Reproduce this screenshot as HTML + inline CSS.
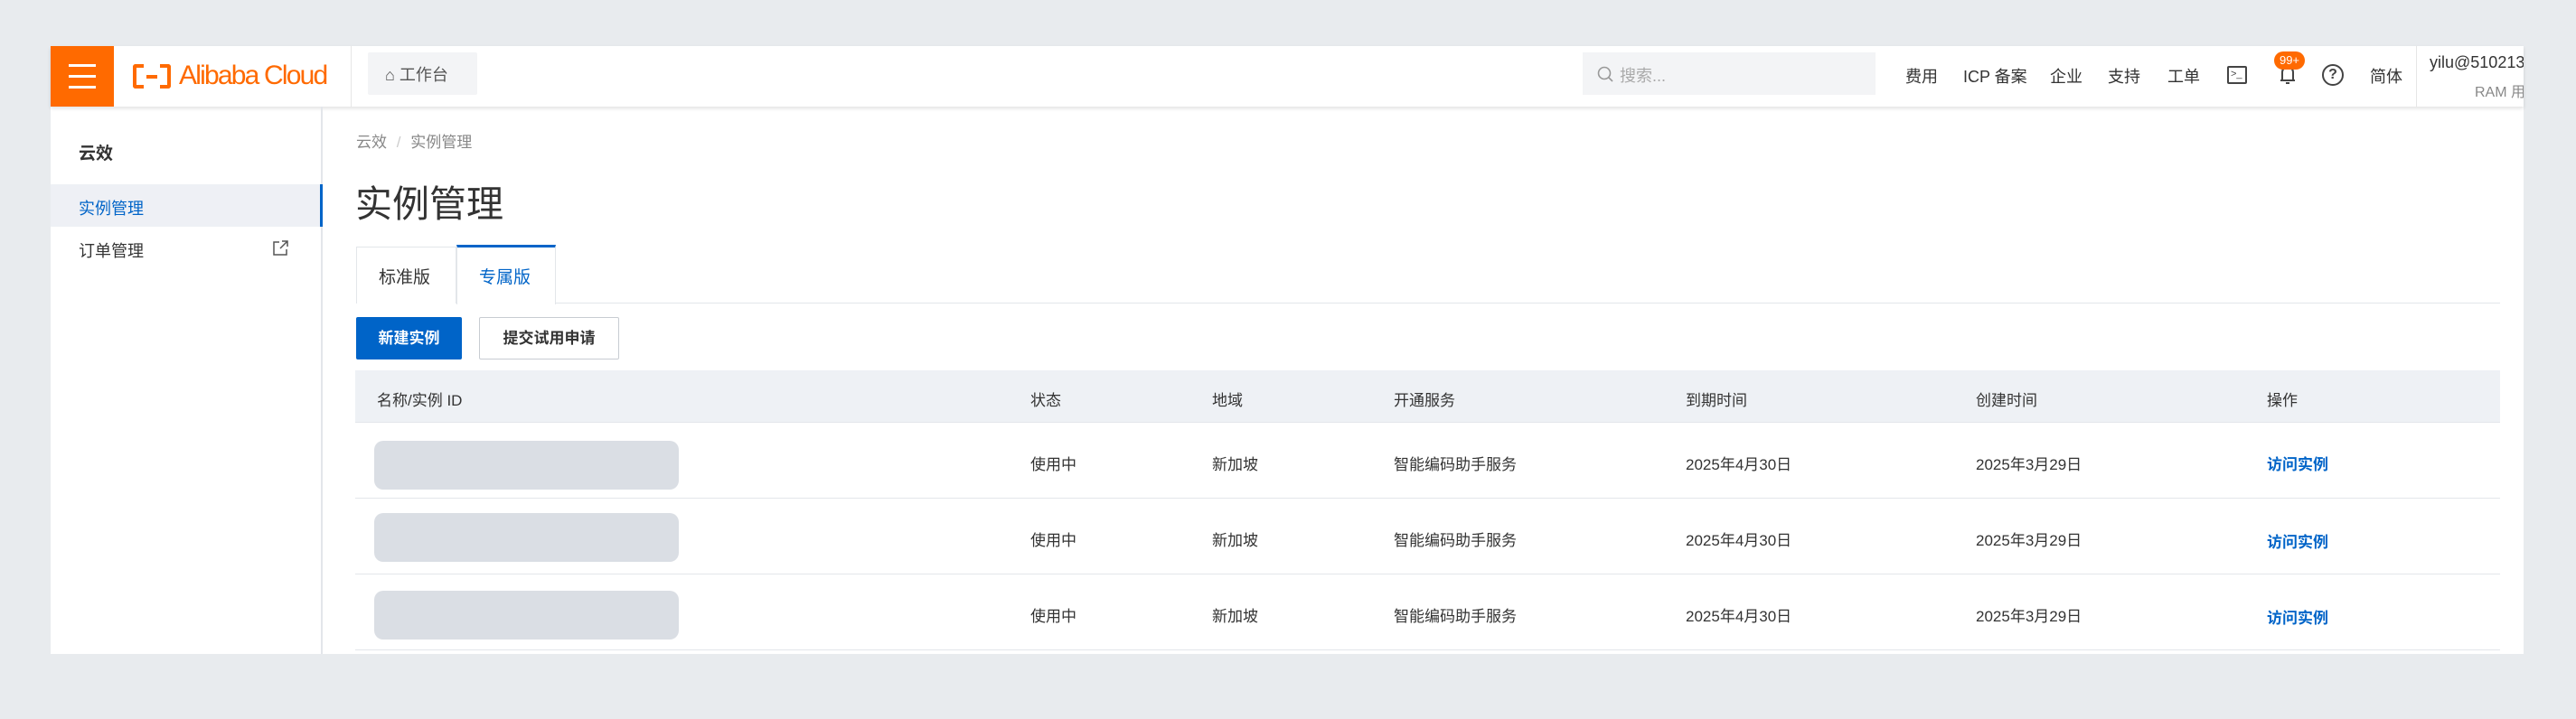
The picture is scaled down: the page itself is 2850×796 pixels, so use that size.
<!DOCTYPE html>
<html><head><meta charset="utf-8"><style>
*{box-sizing:border-box;margin:0;padding:0}
body{width:2850px;height:796px;background:#e8ebee;font-family:"Liberation Sans","Noto Sans CJK SC",sans-serif;color:#333;position:relative;overflow:hidden}
.a{position:absolute;white-space:nowrap}
.panel{position:absolute;left:56px;top:51px;width:2736px;height:673px;background:#fff;overflow:hidden}
.t{font-size:17px;color:#333}
.blue{color:#0064c8}
</style></head><body>
<div class="panel"></div>
<!-- header -->
<div class="a" style="left:56px;top:51px;width:2736px;height:67px;background:#fff;box-shadow:0 2px 4px rgba(0,0,0,.12);overflow:hidden">
  <div class="a" style="left:0;top:0;width:70px;height:67px;background:#ff6a00">
    <div class="a" style="left:20px;top:20px;width:30px;height:3px;background:#fff"></div>
    <div class="a" style="left:20px;top:32px;width:30px;height:3px;background:#fff"></div>
    <div class="a" style="left:20px;top:44px;width:30px;height:3px;background:#fff"></div>
  </div>
  <div class="a" style="left:91px;top:20px;width:44px;height:28px">
    <div class="a" style="left:0;top:0;width:12px;height:27px;border:4px solid #ff6a00;border-right:none;border-radius:3px 0 0 3px"></div>
    <div class="a" style="left:30px;top:0;width:12px;height:27px;border:4px solid #ff6a00;border-left:none;border-radius:0 3px 3px 0"></div>
    <div class="a" style="left:15px;top:12px;width:12px;height:4px;background:#ff6a00"></div>
  </div>
  <div class="a" style="left:142px;top:16px;font-size:30px;color:#ff6a00;letter-spacing:-1.8px">Alibaba Cloud</div>
  <div class="a" style="left:332px;top:0;width:1px;height:67px;background:#e6e6e6"></div>
  <div class="a" style="left:351px;top:7px;width:121px;height:47px;background:#f3f4f6;border-radius:2px"></div>
  <div class="a" style="left:370px;top:18px;font-size:18px;color:#555">⌂ 工作台</div>
  <div class="a" style="left:1695px;top:7px;width:324px;height:47px;background:#f3f4f6"></div>
  <svg class="a" style="left:1710px;top:21px" width="20" height="20" viewBox="0 0 20 20"><circle cx="9" cy="9" r="6.5" fill="none" stroke="#999" stroke-width="1.6"/><path d="M14 14l4 4" stroke="#999" stroke-width="1.6"/></svg>
  <div class="a" style="left:1736px;top:19px;font-size:18px;color:#aaa">搜索...</div>
  <div class="a t" style="left:2052px;top:20px;font-size:18px">费用</div>
  <div class="a t" style="left:2116px;top:20px;font-size:18px">ICP 备案</div>
  <div class="a t" style="left:2212px;top:20px;font-size:18px">企业</div>
  <div class="a t" style="left:2276px;top:20px;font-size:18px">支持</div>
  <div class="a t" style="left:2342px;top:20px;font-size:18px">工单</div>
  <div class="a" style="left:2408px;top:22px;width:22px;height:20px;border:2px solid #444;border-radius:2px;font-size:11px;line-height:14px;padding-left:2px;color:#444">&gt;_</div>
  <svg class="a" style="left:2464px;top:19px" width="22" height="26" viewBox="0 0 22 26"><path d="M5 19V10a6 6 0 0112 0v9zM3 19h16M9 22h4" fill="none" stroke="#444" stroke-width="2"/></svg>
  <div class="a" style="left:2460px;top:6px;width:34px;height:20px;background:#ff6a00;border-radius:10px;color:#fff;font-size:13px;text-align:center;line-height:20px">99+</div>
  <div class="a" style="left:2513px;top:20px;width:24px;height:24px;border:2px solid #444;border-radius:50%;font-size:16px;text-align:center;line-height:20px;color:#444;font-weight:bold">?</div>
  <div class="a t" style="left:2566px;top:20px;font-size:18px">简体</div>
  <div class="a" style="left:2617px;top:0;width:1px;height:67px;background:#e6e6e6"></div>
  <div class="a t" style="left:2632px;top:8px;font-size:18px">yilu@510213</div>
  <div class="a" style="left:2682px;top:37px;font-size:16px;color:#888">RAM 用户</div>
</div>
<!-- sidebar -->
<div class="a" style="left:56px;top:118px;width:301px;height:606px;border-right:2px solid #e3e6ea"></div>
<div class="a" style="left:87px;top:155px;font-size:19px;font-weight:bold;color:#333">云效</div>
<div class="a" style="left:56px;top:204px;width:301px;height:47px;background:#eef0f5;border-right:3px solid #0064c8"></div>
<div class="a blue" style="left:87px;top:217px;font-size:18px">实例管理</div>
<div class="a t" style="left:87px;top:264px;font-size:18px">订单管理</div>
<svg class="a" style="left:300px;top:265px" width="20" height="20" viewBox="0 0 20 20"><path d="M9 3H3v14h14v-6M12 2h6v6M18 2l-8 8" fill="none" stroke="#555" stroke-width="1.5"/></svg>
<!-- content -->
<div class="a" style="left:394px;top:143px;font-size:17px;color:#888">云效 <span style="color:#ccc;margin:0 6px">/</span> 实例管理</div>
<div class="a" style="left:393px;top:192px;font-size:41px;color:#333">实例管理</div>
<div class="a" style="left:394px;top:335px;width:2372px;height:1px;background:#e3e6ea"></div>
<div class="a" style="left:394px;top:273px;width:111px;height:63px;border:1px solid #e3e6ea;border-bottom:none;background:#fff"></div>
<div class="a" style="left:419px;top:292px;font-size:19px;color:#333">标准版</div>
<div class="a" style="left:505px;top:271px;width:110px;height:66px;border:1px solid #e3e6ea;border-top:3px solid #0064c8;border-bottom:none;background:#fff"></div>
<div class="a blue" style="left:530px;top:292px;font-size:19px">专属版</div>
<div class="a" style="left:394px;top:351px;width:117px;height:47px;background:#0064c8;border-radius:2px;color:#fff;font-size:17px;font-weight:bold;text-align:center;line-height:47px">新建实例</div>
<div class="a" style="left:530px;top:351px;width:155px;height:47px;border:1px solid #c8ccd2;border-radius:2px;color:#333;font-size:17px;font-weight:bold;text-align:center;line-height:45px">提交试用申请</div>
<!-- table -->
<div class="a" style="left:393px;top:410px;width:2373px;height:58px;background:#eef1f5;border-bottom:1px solid #e3e6ea"></div>
<div class="a t" style="left:417px;top:429px">名称/实例 ID</div>
<div class="a t" style="left:1140px;top:429px">状态</div>
<div class="a t" style="left:1341px;top:429px">地域</div>
<div class="a t" style="left:1542px;top:429px">开通服务</div>
<div class="a t" style="left:1865px;top:429px">到期时间</div>
<div class="a t" style="left:2186px;top:429px">创建时间</div>
<div class="a t" style="left:2508px;top:429px">操作</div>
<div class="a" style="left:393px;top:551px;width:2373px;height:1px;background:#e3e6ea"></div>
<div class="a" style="left:393px;top:635px;width:2373px;height:1px;background:#e3e6ea"></div>
<div class="a" style="left:393px;top:719px;width:2373px;height:1px;background:#e3e6ea"></div>
<div class="a" style="left:414px;top:488px;width:337px;height:54px;background:#dadee4;border-radius:10px"></div>
<div class="a" style="left:414px;top:568px;width:337px;height:54px;background:#dadee4;border-radius:10px"></div>
<div class="a" style="left:414px;top:654px;width:337px;height:54px;background:#dadee4;border-radius:10px"></div>
<div class="a t" style="left:1140px;top:500px">使用中</div><div class="a t" style="left:1341px;top:500px">新加坡</div><div class="a t" style="left:1542px;top:500px">智能编码助手服务</div><div class="a t" style="left:1865px;top:500px">2025年4月30日</div><div class="a t" style="left:2186px;top:500px">2025年3月29日</div><div class="a blue" style="left:2508px;top:500px;font-size:17px;font-weight:bold">访问实例</div>
<div class="a t" style="left:1140px;top:584px">使用中</div><div class="a t" style="left:1341px;top:584px">新加坡</div><div class="a t" style="left:1542px;top:584px">智能编码助手服务</div><div class="a t" style="left:1865px;top:584px">2025年4月30日</div><div class="a t" style="left:2186px;top:584px">2025年3月29日</div><div class="a blue" style="left:2508px;top:586px;font-size:17px;font-weight:bold">访问实例</div>
<div class="a t" style="left:1140px;top:668px">使用中</div><div class="a t" style="left:1341px;top:668px">新加坡</div><div class="a t" style="left:1542px;top:668px">智能编码助手服务</div><div class="a t" style="left:1865px;top:668px">2025年4月30日</div><div class="a t" style="left:2186px;top:668px">2025年3月29日</div><div class="a blue" style="left:2508px;top:670px;font-size:17px;font-weight:bold">访问实例</div>
<div class="a" style="left:0;top:724px;width:2850px;height:72px;background:#e8ebee"></div>
</body></html>
